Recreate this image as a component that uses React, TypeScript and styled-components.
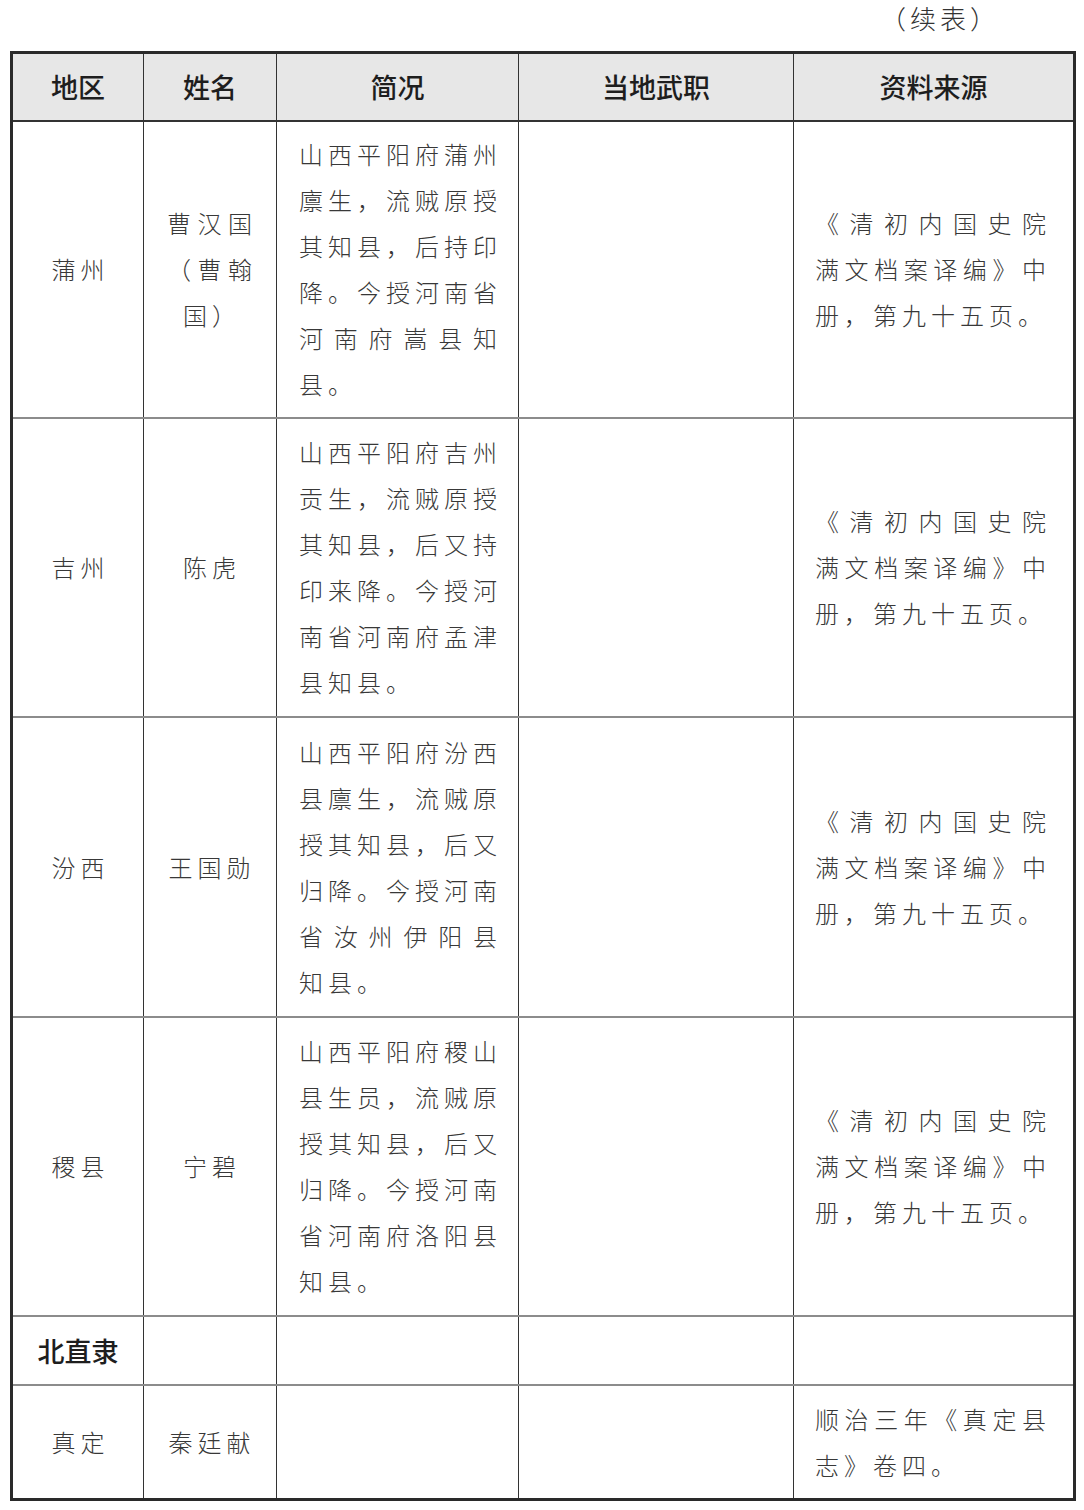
import React from "react";
import styled, { createGlobalStyle } from "styled-components";

const GlobalStyle = createGlobalStyle`
  html, body {
    margin: 0;
    padding: 0;
    background: #ffffff;
  }
  body {
    font-family: "Noto Sans CJK SC", "Noto Sans", sans-serif;
    color: #333333;
  }
`;

const Page = styled.div`
  width: 1084px;
  padding: 0 0 0 10px;
  box-sizing: border-box;
`;

const Caption = styled.div`
  height: 51px;
  display: flex;
  align-items: center;
  justify-content: flex-end;
  padding-right: 84px;
  padding-bottom: 16px;
  box-sizing: border-box;
  font-size: 26px;
  font-weight: 300;
  letter-spacing: 4px;
  color: #333;
`;

const Table = styled.table`
  width: 1063px;
  border-collapse: collapse;
  table-layout: fixed;
  border: 3px solid #2a2a2a;
`;

const Row = styled.tr<{ $h: number }>`
  height: ${(p) => p.$h}px;
  border-bottom: 2px solid #8c8c8c;
`;

const HeadRow = styled.tr`
  height: 68px;
  background: #e7e7e7;
  border-bottom: 2px solid #333;
`;

const HeadCell = styled.th`
  border-right: 1.5px solid #333;
  font-size: 27px;
  font-weight: 500;
  color: #1e1e1e;
  text-align: center;
  vertical-align: middle;
  padding: 0;
  letter-spacing: 0;
`;

type Kind = "region" | "name" | "brief" | "post" | "source";

const padFor: Record<Kind, string> = {
  region: "0 0 0 5px",
  name: "0 19px 0 23px",
  brief: "0 16px 0 22px",
  post: "0",
  source: "0 22px 0 21px",
};

const Cell = styled.td<{ $kind: Kind }>`
  border-right: 1.5px solid #333;
  vertical-align: middle;
  padding: ${(p) => padFor[p.$kind]};
  font-size: 24px;
  font-weight: 300;
  line-height: 46px;
  letter-spacing: 5px;
  color: #383838;
  text-align: ${(p) =>
    p.$kind === "region" || p.$kind === "name" ? "center" : "left"};
`;

const SectionCell = styled.td`
  border-right: 1.5px solid #333;
  vertical-align: middle;
  text-align: center;
  padding: 0;
  font-size: 27px;
  font-weight: 500;
  color: #1e1e1e;
`;

const Line = styled.div<{ $spread: boolean }>`
  text-align-last: ${(p) => (p.$spread ? "justify" : "auto")};
  text-align: ${(p) => (p.$spread ? "justify" : "inherit")};
  white-space: nowrap;
`;

type Entry = {
  region: string;
  name: string[];
  brief: string[];
  source: string[];
  h: number;
};

const entries: Entry[] = [
  {
    region: "蒲州",
    name: ["曹汉国", "（曹翰", "国）"],
    brief: ["山西平阳府蒲州", "廪生，流贼原授", "其知县，后持印", "降。今授河南省", "河南府嵩县知", "县。"],
    source: ["《清初内国史院", "满文档案译编》中", "册，第九十五页。"],
    h: 297,
  },
  {
    region: "吉州",
    name: ["陈虎"],
    brief: ["山西平阳府吉州", "贡生，流贼原授", "其知县，后又持", "印来降。今授河", "南省河南府孟津", "县知县。"],
    source: ["《清初内国史院", "满文档案译编》中", "册，第九十五页。"],
    h: 299,
  },
  {
    region: "汾西",
    name: ["王国勋"],
    brief: ["山西平阳府汾西", "县廪生，流贼原", "授其知县，后又", "归降。今授河南", "省汝州伊阳县", "知县。"],
    source: ["《清初内国史院", "满文档案译编》中", "册，第九十五页。"],
    h: 300,
  },
  {
    region: "稷县",
    name: ["宁碧"],
    brief: ["山西平阳府稷山", "县生员，流贼原", "授其知县，后又", "归降。今授河南", "省河南府洛阳县", "知县。"],
    source: ["《清初内国史院", "满文档案译编》中", "册，第九十五页。"],
    h: 299,
  },
];

const Lines: React.FC<{ lines: string[] }> = ({ lines }) => (
  <>
    {lines.map((l, i) => (
      <Line key={i} $spread={lines.length > 1 && i < lines.length - 1}>
        {l}
      </Line>
    ))}
  </>
);

const widths = [132, 133, 242, 275, 281];
const heads = ["地区", "姓名", "简况", "当地武职", "资料来源"];

export default function App() {
  return (
    <>
      <GlobalStyle />
      <Page>
        <Caption>（续表）</Caption>
        <Table>
          <colgroup>
            {widths.map((w, i) => (
              <col key={i} style={{ width: w }} />
            ))}
          </colgroup>
          <thead>
            <HeadRow>
              {heads.map((h) => (
                <HeadCell key={h}>{h}</HeadCell>
              ))}
            </HeadRow>
          </thead>
          <tbody>
            {entries.map((e) => (
              <Row key={e.region} $h={e.h}>
                <Cell $kind="region">{e.region}</Cell>
                <Cell $kind="name">
                  <Lines lines={e.name} />
                </Cell>
                <Cell $kind="brief">
                  <Lines lines={e.brief} />
                </Cell>
                <Cell $kind="post" />
                <Cell $kind="source">
                  <Lines lines={e.source} />
                </Cell>
              </Row>
            ))}
            <Row $h={69}>
              <SectionCell>北直隶</SectionCell>
              <SectionCell />
              <SectionCell />
              <SectionCell />
              <SectionCell />
            </Row>
            <Row $h={115}>
              <Cell $kind="region">真定</Cell>
              <Cell $kind="name">秦廷献</Cell>
              <Cell $kind="brief" />
              <Cell $kind="post" />
              <Cell $kind="source">
                <Lines lines={["顺治三年《真定县", "志》卷四。"]} />
              </Cell>
            </Row>
          </tbody>
        </Table>
      </Page>
    </>
  );
}
